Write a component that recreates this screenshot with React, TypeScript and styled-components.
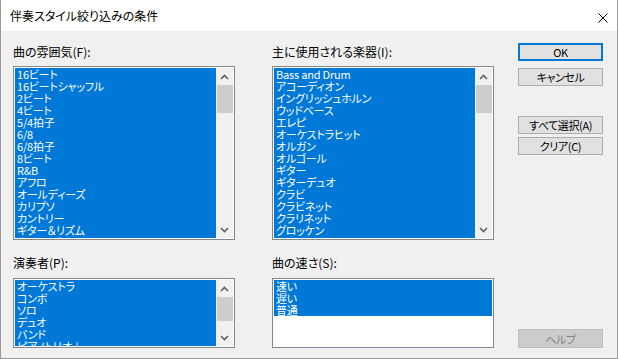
import styled, { createGlobalStyle } from "styled-components";

const GlobalStyle = createGlobalStyle`
  html, body {
    margin: 0;
    padding: 0;
    background: #f0f0f0;
  }
  * {
    box-sizing: border-box;
  }
`;

const uiFont = `"MS UI Gothic", "Noto Sans CJK JP", "Noto Sans", sans-serif`;

const Dialog = styled("div")`
  width: 618px;
  height: 359px;
  display: flex;
  flex-direction: column;
  background: #f0f0f0;
  border: 1px solid #9a9a9a;
  border-top: none;
  font-family: ${uiFont};
  font-feature-settings: "palt";
  color: #000;
  overflow: hidden;
`;

const TitleBar = styled("div")`
  height: 31px;
  flex: none;
  display: flex;
  align-items: center;
  justify-content: space-between;
  padding: 0 9px;
  background: #fff;
  font-size: 12px;
`;

const Title = styled("span")`
  line-height: 14px;
  margin-top: 1px;
`;

const CloseBox = styled("div")`
  width: 10px;
  height: 10px;
  display: flex;
  margin-top: 4px;
`;

const Body = styled("div")`
  flex: 1;
  display: flex;
  padding: 12px 0 10px 12px;
`;

const Lists = styled("div")`
  display: grid;
  grid-template-columns: 222px 222px;
  column-gap: 37px;
  row-gap: 16px;
  padding-top: 2px;
`;

const Field = styled("div")`
  display: flex;
  flex-direction: column;
`;

const Label = styled("div")<{ $gap: number }>`
  font-size: 12px;
  line-height: 14px;
  height: 14px;
  margin-bottom: ${(p) => p.$gap}px;
  white-space: nowrap;
`;

const ListBox = styled("div")<{ $h: number }>`
  height: ${(p) => p.$h}px;
  display: flex;
  background: #fff;
  border: 1px solid #828790;
  padding: 1px;
`;

const Items = styled("div")`
  flex: 1;
  overflow: hidden;
`;

const Item = styled("div")`
  height: 12px;
  line-height: 12px;
  padding-left: 2px;
  background: #0078d7;
  color: #fff;
  font-size: 11px;
  letter-spacing: -0.2px;
  white-space: nowrap;
`;

const ScrollBar = styled("div")`
  width: 17px;
  flex: none;
  display: flex;
  flex-direction: column;
  background: #f0f0f0;
`;

const Arrow = styled("div")`
  height: 17px;
  flex: none;
  display: flex;
  align-items: center;
  justify-content: center;
`;

const Thumb = styled("div")<{ $h: number }>`
  height: ${(p) => p.$h}px;
  margin: 0 0 0 1px;
  background: #cdcdcd;
`;

const Track = styled("div")`
  flex: 1;
`;

const Buttons = styled("div")`
  width: 85px;
  margin-left: 24px;
  display: flex;
  flex-direction: column;
`;

const Button = styled("div")<{ $default?: boolean; $disabled?: boolean; $mt?: number }>`
  height: 18px;
  margin-top: ${(p) => p.$mt ?? 0}px;
  display: flex;
  align-items: center;
  justify-content: center;
  font-size: 11px;
  letter-spacing: -0.4px;
  background: ${(p) => (p.$disabled ? "#cccccc" : "#e1e1e1")};
  color: ${(p) => (p.$disabled ? "#838383" : "#000")};
  border: ${(p) => (p.$default ? "2px solid #0078d7" : p.$disabled ? "1px solid #bfbfbf" : "1px solid #adadad")};
  white-space: nowrap;
`;

const HelpButton = styled(Button)`
  margin-top: auto;
  height: 19px;
`;

const Chevron = ({ up }: { up?: boolean }) => (
  <svg width="9" height="6" viewBox="0 0 9 6">
    <path
      d={up ? "M1 5 L4.5 1.5 L8 5" : "M1 1 L4.5 4.5 L8 1"}
      fill="none"
      stroke="#606060"
      strokeWidth="1.6"
    />
  </svg>
);

const Scroller = ({ thumb }: { thumb: number }) => (
  <ScrollBar>
    <Arrow>
      <Chevron up />
    </Arrow>
    <Thumb $h={thumb} />
    <Track />
    <Arrow>
      <Chevron />
    </Arrow>
  </ScrollBar>
);

const moods = [
  "16ビート",
  "16ビートシャッフル",
  "2ビート",
  "4ビート",
  "5/4拍子",
  "6/8",
  "6/8拍子",
  "8ビート",
  "R&B",
  "アフロ",
  "オールディーズ",
  "カリプソ",
  "カントリー",
  "ギター＆リズム",
  "クラシック",
];

const instruments = [
  "Bass and Drum",
  "アコーディオン",
  "イングリッシュホルン",
  "ウッドベース",
  "エレピ",
  "オーケストラヒット",
  "オルガン",
  "オルゴール",
  "ギター",
  "ギターデュオ",
  "クラビ",
  "クラビネット",
  "クラリネット",
  "グロッケン",
  "コーラス",
];

const players = ["オーケストラ", "コンボ", "ソロ", "デュオ", "バンド", "ピアノトリオ＋"];

const speeds = ["速い", "遅い", "普通"];

export default function App() {
  return (
    <>
      <GlobalStyle />
      <Dialog>
        <TitleBar>
          <Title>伴奏スタイル絞り込みの条件</Title>
          <CloseBox>
            <svg width="10" height="10" viewBox="0 0 10 10">
              <path d="M0.5 0.5 L9.5 9.5 M9.5 0.5 L0.5 9.5" stroke="#000" strokeWidth="1" />
            </svg>
          </CloseBox>
        </TitleBar>
        <Body>
          <Lists>
            <Field>
              <Label $gap={7}>曲の雰囲気(F):</Label>
              <ListBox $h={174}>
                <Items>
                  {moods.map((m) => (
                    <Item key={m}>{m}</Item>
                  ))}
                </Items>
                <Scroller thumb={28} />
              </ListBox>
            </Field>
            <Field>
              <Label $gap={7}>主に使用される楽器(I):</Label>
              <ListBox $h={174}>
                <Items>
                  {instruments.map((m) => (
                    <Item key={m}>{m}</Item>
                  ))}
                </Items>
                <Scroller thumb={28} />
              </ListBox>
            </Field>
            <Field>
              <Label $gap={8}>演奏者(P):</Label>
              <ListBox $h={70}>
                <Items>
                  {players.map((m) => (
                    <Item key={m}>{m}</Item>
                  ))}
                </Items>
                <Scroller thumb={24} />
              </ListBox>
            </Field>
            <Field>
              <Label $gap={8}>曲の速さ(S):</Label>
              <ListBox $h={70}>
                <Items>
                  {speeds.map((m) => (
                    <Item key={m}>{m}</Item>
                  ))}
                </Items>
              </ListBox>
            </Field>
          </Lists>
          <Buttons>
            <Button $default>OK</Button>
            <Button $mt={7}>キャンセル</Button>
            <Button $mt={30}>すべて選択(A)</Button>
            <Button $mt={3}>クリア(C)</Button>
            <HelpButton $disabled>ヘルプ</HelpButton>
          </Buttons>
        </Body>
      </Dialog>
    </>
  );
}
